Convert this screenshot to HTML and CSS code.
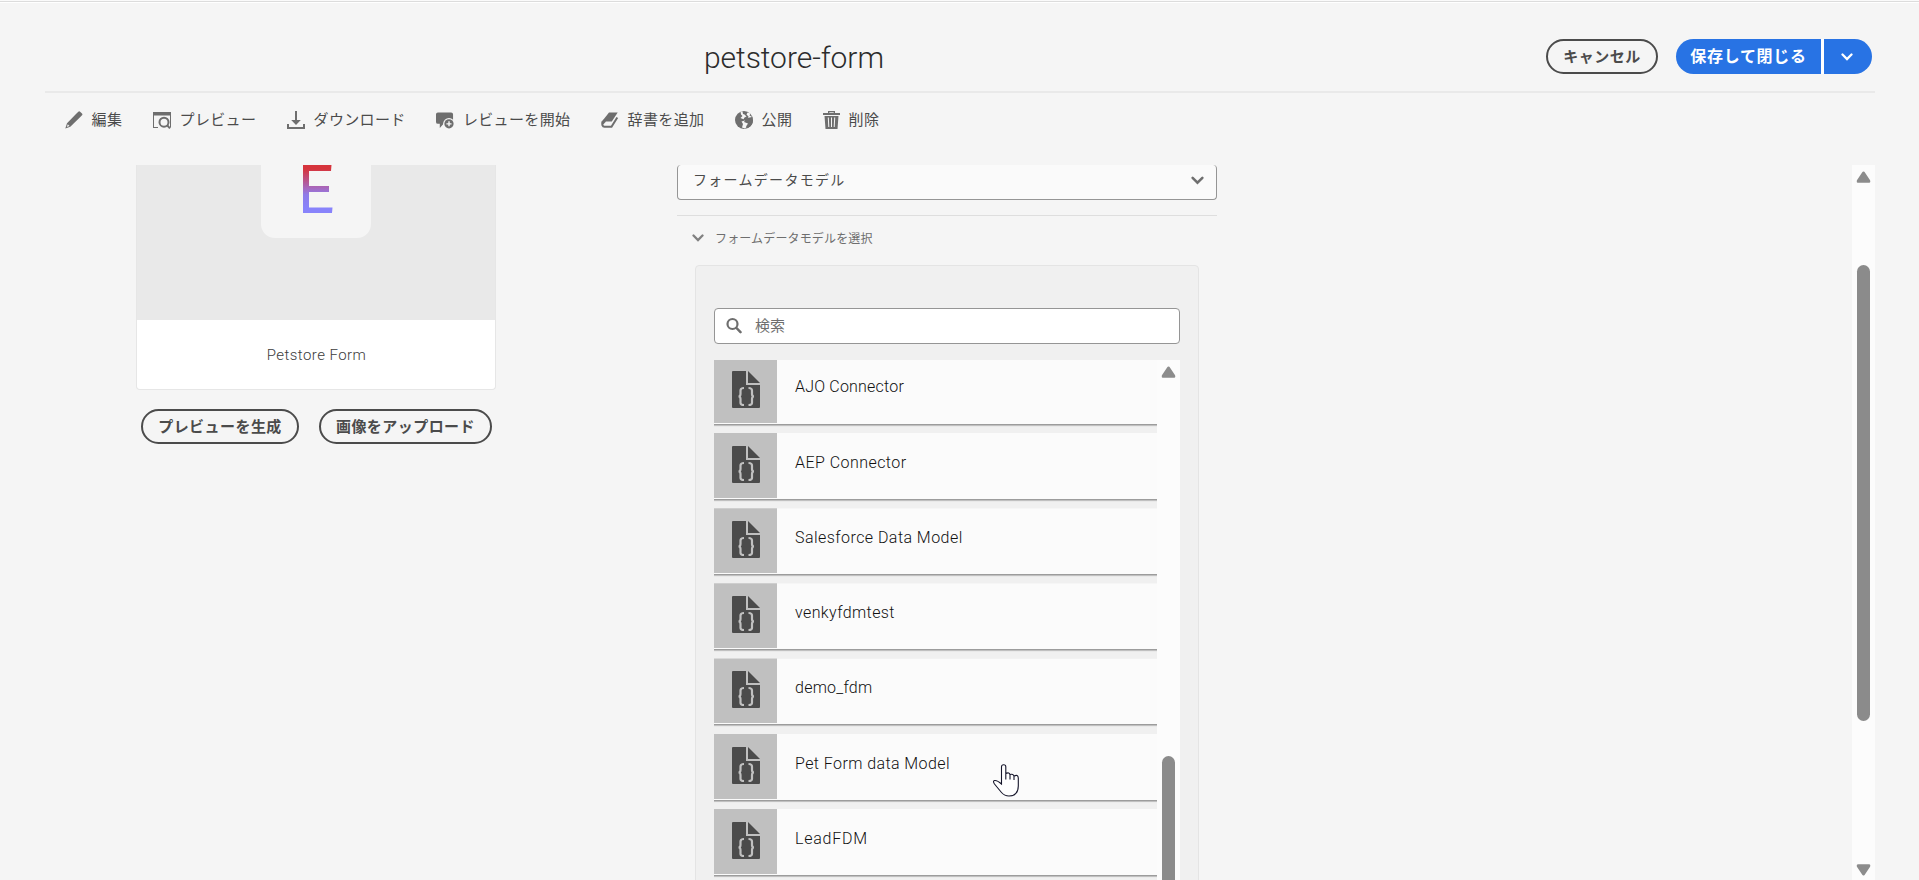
FILE: index.html
```html
<!DOCTYPE html>
<html lang="ja">
<head>
<meta charset="utf-8">
<title>petstore-form</title>
<link rel="stylesheet" href="styles.css">
</head>
<body>
<svg class="defs" width="0" height="0">
  <symbol id="file" viewBox="0 0 28 37">
    <path d="M1 0H14V14H28V36Q28 37 27 37H1Q0 37 0 36V1Q0 0 1 0Z" fill="#4b4b4b"/>
    <path d="M16 0L28 12H16Z" fill="#4b4b4b"/>
    <path d="M12 17Q8.500 17 8.500 19.500V23Q8.500 25.500 6.500 25.500Q8.500 25.500 8.500 28V32Q8.500 34 12 34M16.500 17Q20 17 20 19.500V23Q20 25.500 22 25.500Q20 25.500 20 28V32Q20 34 16.500 34" fill="none" stroke="#c0c0c0" stroke-width="2.200"/>
  </symbol>
  <symbol id="chev" viewBox="0 0 12 8"><path d="M1.500 1.500L6 6L10.500 1.500" fill="none" stroke="currentColor" stroke-width="2.300" stroke-linecap="round"/></symbol>
  <symbol id="up" viewBox="0 0 14 12"><path d="M7 2L12.500 10.300H1.500Z" fill="#8c8c8c" stroke="#8c8c8c" stroke-width="3" stroke-linejoin="round"/></symbol>
</svg>
<header class="header">
  <h1 class="title">petstore-form</h1>
  <div class="actions">
    <button class="pill cancel">キャンセル</button>
    <button class="save">保存して閉じる</button>
    <button class="more"><svg width="12" height="8"><use href="#chev"/></svg></button>
  </div>
</header>
<nav class="toolbar">
  <a class="tool"><svg viewBox="0 0 18 18"><path d="M11 3L13.300.7Q14.200-.2 15.100.7L17 2.600Q17.800 3.500 17 4.300L14.800 6.500L5.300 15.700L.3 17.500L2 12.200Z"/><path d="M2.800 13.200L4.500 15L1.800 16Z" fill="#f5f5f5"/></svg><span>編集</span></a>
  <a class="tool"><svg viewBox="0 0 18 18"><path d="M0 1H18V16.500H17V4.500H1V16H5V17H0Z"/><circle cx="11" cy="11.200" r="4.500" fill="none" stroke="#6e6e6e" stroke-width="2"/><path d="M13.200 14.800L14.700 13.300L17.700 16.700L16.300 18Z"/></svg><span>プレビュー</span></a>
  <a class="tool"><svg viewBox="0 0 18 18"><path d="M8 0H10V9H13.800L9 14L4.200 9H8ZM0 13H2V16H16V13H18V18H0Z"/></svg><span>ダウンロード</span></a>
  <a class="tool"><svg viewBox="0 0 19 18"><path d="M2 1H16Q18 1 18 3V12H9L4 17.500V13H2Q0 13 0 11V3Q0 1 2 1Z"/><circle cx="13.700" cy="13" r="6.200" fill="#f5f5f5"/><circle cx="13.700" cy="13" r="4.900"/><path d="M13 10.300H14.500V15.700H13ZM11 12.300H16.400V13.700H11Z" fill="#f5f5f5"/></svg><span>レビューを開始</span></a>
  <a class="tool"><svg viewBox="0 0 18 18"><path d="M8 1.500H16.700L10.800 10.500H1.500Q1.500 9.500 2.500 8.500Z"/><path d="M1.500 10.500Q.5 15.500 3.500 15.800H10.500L16.300 6.500" fill="none" stroke="#6e6e6e" stroke-width="2"/><path d="M.8 11Q1.200 9.500 2.500 8.500L5 10.500L2.300 13.500Z"/></svg><span>辞書を追加</span></a>
  <a class="tool"><svg viewBox="0 0 18 18"><circle cx="9" cy="9" r="9"/><path d="M5.500.5L6 3.500L7.500 5L5.500 7L8.500 8.200L9.500 6.500L11.500 5.500L9.500 3.500L8 3L7.500.5ZM12.500 1.500L11.500 3.500L13.500 5.500L13 7.500L11 9L10 10.500L12 11.500L14.500 12.500L13 14.500L10 17.500L7 16.500L8 13L6.500 10.500L9 9.800L12.500 8.500L17.500 9L16.500 5.500L14.500 4.500L15.500 2.500Z" fill="#f5f5f5"/><path d="M12.500 7L17 6L18 9Q18 14.500 13 17L11 15.500L13 12.500L9 11L10.500 8.500Z"/></svg><span>公開</span></a>
  <a class="tool"><svg class="trash" viewBox="0 0 17 18"><path d="M5 0H12V2H17V4H0V2H5ZM6.300 1.200V2H10.700V1.200ZM1.500 5H15.500L14.500 18H2.500ZM4.800 6.500L5.300 16H6.300L5.800 6.500ZM8 6.500V16H9V6.500ZM11.200 6.500L10.700 16H11.700L12.200 6.500Z" fill-rule="evenodd"/></svg><span>削除</span></a>
</nav>
<main class="main">
  <section class="side">
    <div class="card">
      <div class="thumb"><div class="tile"><svg width="30" height="50"><defs><linearGradient id="g" x1="0" y1="0" x2="0" y2="1"><stop offset=".08" stop-color="#d6343c"/><stop offset=".5" stop-color="#a46bc4"/><stop offset=".62" stop-color="#8f7ce8"/><stop offset=".9" stop-color="#8883fb"/></linearGradient></defs><path d="M0 0H28.500L28 6H6V21H26V27H6V42.500H29.500L29 48H0Z" fill="url(#g)"/></svg></div></div>
      <div class="name">Petstore Form</div>
    </div>
    <div class="pills">
      <button class="pill gen">プレビューを生成</button>
      <button class="pill upload">画像をアップロード</button>
    </div>
  </section>
  <section class="detail">
    <div class="select"><span>フォームデータモデル</span><svg width="13" height="9"><use href="#chev"/></svg></div>
    <div class="group"><svg width="12" height="8"><use href="#chev"/></svg><span>フォームデータモデルを選択</span></div>
    <div class="panel">
      <div class="search"><svg width="16" height="17" viewBox="0 0 16 17"><circle cx="6.500" cy="7" r="5" fill="none" stroke="#6e6e6e" stroke-width="2.200"/><path d="M10.500 11L14.500 15.200" stroke="#6e6e6e" stroke-width="2.500" stroke-linecap="round"/></svg><span>検索</span></div>
      <div class="list">
        <div class="rows">
          <div class="row first"><div class="ico"><svg width="28" height="37"><use href="#file"/></svg></div><span class="w1">AJO Connector</span></div>
          <div class="row"><div class="ico"><svg width="28" height="37"><use href="#file"/></svg></div><span class="w2">AEP Connector</span></div>
          <div class="row"><div class="ico"><svg width="28" height="37"><use href="#file"/></svg></div><span class="w3">Salesforce Data Model</span></div>
          <div class="row"><div class="ico"><svg width="28" height="37"><use href="#file"/></svg></div><span class="w4">venkyfdmtest</span></div>
          <div class="row"><div class="ico"><svg width="28" height="37"><use href="#file"/></svg></div><span class="w5">demo_fdm</span></div>
          <div class="row"><div class="ico"><svg width="28" height="37"><use href="#file"/></svg></div><span class="w6">Pet Form data Model</span></div>
          <div class="row"><div class="ico"><svg width="28" height="37"><use href="#file"/></svg></div><span class="w7">LeadFDM</span></div>
        </div>
        <div class="bar inner"><svg width="15" height="12" viewBox="0 0 14 12"><use href="#up"/></svg><div class="grip"></div></div>
      </div>
    </div>
  </section>
  <div class="bar outer"><svg width="15" height="12" viewBox="0 0 14 12"><use href="#up"/></svg><div class="grip"></div><svg class="down" width="15" height="12" viewBox="0 0 14 12"><use href="#up"/></svg></div>
</main>
<svg class="cursor" width="26" height="33" viewBox="0 0 26 33"><path d="M8.500 20V2.800Q8.500.8 10.700.8Q12.800.8 12.800 2.800V15.500V9.500Q16.500 7.800 17 11V15.500V10.500Q20.500 9.500 21 12.500V16V12Q25 10 25.300 14V22Q25 32 16 32Q11.500 32 8.500 28.500L1.500 20Q-.5 17 1.500 16.500Q4 16 8.500 20Z" fill="#fff" stroke="#15152a" stroke-width="1.100"/></svg>
</body>
</html>
```
FILE: styles.css
```css
* { box-sizing: border-box; }
body {
  margin: 0;
  height: 880px;
  overflow: hidden;
  background: #f5f5f5;
  border-top: 1px solid #fafafa;
  color: #4b4b4b;
  font-family: Roboto, "Noto Sans CJK JP", sans-serif;
  position: relative;
}
svg { display: block; flex: none; }
.defs { position: absolute; }
button { font: inherit; padding: 0; margin: 0; border: 0; white-space: nowrap; }
.header {
  height: 92px;
  padding: 0 47px 0 0;
  display: flex;
  justify-content: space-between;
  box-shadow: inset 0 1px #dcdcdc, inset 0 2px #fff;
}
.title {
  margin: 37px 0 0 704px;
  font-size: 30px;
  line-height: 40px;
  font-weight: 300;
  letter-spacing: -.05px;
  color: #2c2c2c;
}
.actions { display: flex; margin-top: 38px; height: 35px; }
.pill {
  height: 35px;
  border: 2px solid #4b4b4b;
  border-radius: 18px;
  background: transparent;
  color: #4b4b4b;
  font-size: 15px;
  font-weight: 700;
  letter-spacing: .45px;
  line-height: 30px;
}
.cancel { width: 112px; margin-right: 18px; }
.save {
  width: 145px;
  background: #2873e4;
  color: #fff;
  border-radius: 18px 0 0 18px;
  font-size: 16px;
  font-weight: 700;
  letter-spacing: .7px;
  line-height: 32px;
}
.more {
  width: 51px;
  border-left: 3px solid #fff;
  border-radius: 0 18px 18px 0;
  background: #2873e4;
  background-clip: padding-box;
  color: #fff;
  display: flex;
  align-items: center;
  justify-content: center;
  padding-right: 2px;
}
.toolbar {
  margin: -2px 44px 0 45px;
  border-top: 2px solid #e9e9e9;
  height: 74px;
  padding: 18px 0 0 20px;
  display: flex;
  gap: 30.600px;
}
.tool {
  display: flex;
  height: 18px;
  align-items: center;
  gap: 8.600px;
  font-size: 15px;
  letter-spacing: .36px;
  white-space: nowrap;
}
.tool span { line-height: 18px; }
.tool svg { width: 18px; height: 18px; fill: #6e6e6e; }
.tool .trash { width: 17px; }
.main { height: 715px; margin-right: 44px; display: flex; overflow: hidden; }
.side { width: 677px; padding-left: 136px; }
.card {
  width: 360px;
  height: 225px;
  border: 1px solid #e6e6e6;
  border-top: 0;
  border-radius: 0 0 4px 4px;
  background: #fff;
  overflow: hidden;
}
.thumb { height: 155px; background: #e9e9e9; display: flex; justify-content: center; }
.tile {
  width: 110px;
  height: 73px;
  border-radius: 0 0 14px 14px;
  background: #f5f5f5;
  display: flex;
  justify-content: center;
  padding-left: 4px;
}
.name {
  text-align: center;
  font-size: 15px;
  font-weight: 300;
  letter-spacing: .45px;
  line-height: 71px;
  padding-left: 1px;
  color: #3c3c3c;
}
.pills { display: flex; gap: 20px; padding: 19px 0 0 5px; }
.gen { width: 158px; }
.upload { width: 173px; }
.detail { width: 540px; }
.select {
  height: 35px;
  border: 1px solid #959595;
  border-top: 0;
  border-radius: 4px;
  background: #fafafa;
  display: flex;
  align-items: center;
  justify-content: space-between;
  padding: 0 12px 4px 15px;
  font-size: 14px;
  letter-spacing: 1.300px;
}
.select span { margin-top: -2px; }
.select svg { color: #6e6e6e; }
.group {
  margin-top: 15px;
  height: 50px;
  border-top: 1px solid #dedede;
  display: flex;
  align-items: center;
  gap: 11px;
  padding: 0 0 5px 15px;
  font-size: 12px;
  letter-spacing: .15px;
  color: #6e6e6e;
}
.group svg { color: #808080; }
.group span { margin-top: -2px; }
.panel {
  margin: 0 18px;
  height: 640px;
  border: 1px solid #e4e4e4;
  border-radius: 4px;
  background: #f0f0f0;
  padding: 42px 18px 0;
}
.search {
  height: 36px;
  border: 1px solid #959595;
  border-radius: 4px;
  background: #fff;
  display: flex;
  align-items: center;
  gap: 13px;
  padding: 0 0 2px 11px;
  font-size: 15px;
  color: #6e6e6e;
}
.search span { margin-top: -2px; }
.list { margin-top: 16px; height: 540px; display: flex; overflow: hidden; }
.rows { width: 443px; margin-top: -2px; display: flex; flex-direction: column; gap: 9.120px; }
.row {
  height: 66px;
  flex: none;
  display: flex;
  background: #fbfbfb;
  box-shadow: 0 1px 1px #9c9c9c, 0 2px 1px #c8c8c8;
  clip-path: inset(0 0 -3px 0);
  font-size: 16px;
  font-weight: 300;
  color: #111;
}
.row span { padding-left: 18px; line-height: 59px; white-space: nowrap; }
.row.first span { line-height: 57px; }
.w1 { letter-spacing: .2px; }
.w2 { letter-spacing: .45px; }
.w3 { letter-spacing: .45px; }
.w4 { letter-spacing: .4px; }
.w5 { letter-spacing: .25px; }
.w6 { letter-spacing: .42px; }
.w7 { letter-spacing: .75px; }
.ico { width: 63px; height: 65px; background: #c0c0c0; padding: 13px 0 0 18px; }
.bar { width: 23px; background: #fcfcfc; display: flex; flex-direction: column; align-items: center; padding-top: 6px; }
.grip { width: 13px; border-radius: 7px; background: #8b8b8b; flex: none; }
.inner .grip { height: 300px; margin-top: 378px; }
.outer { margin-left: auto; }
.outer .grip { height: 456px; margin-top: 82px; }
.down { margin-top: 143px; transform: scaleY(-1); }
.cursor { position: absolute; left: 993px; top: 763px; }
```
